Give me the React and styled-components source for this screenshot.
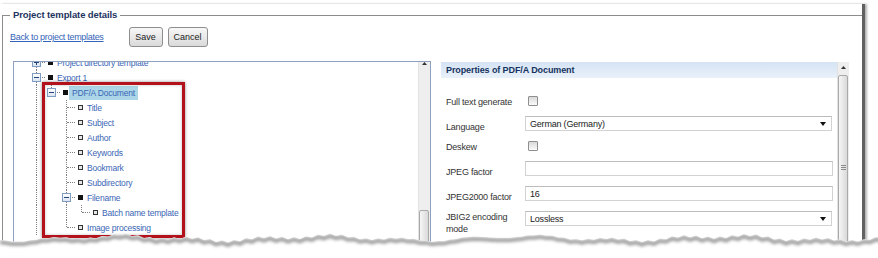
import React from 'react';
import styled, { createGlobalStyle } from 'styled-components';

const GlobalStyle = createGlobalStyle`
  html, body {
    margin: 0;
    padding: 0;
    background: #fff;
  }
  body {
    font-family: "Liberation Sans", Arial, sans-serif;
  }
  * {
    box-sizing: border-box;
  }
`

const Page = styled.div`
  position: relative;
  width: 878px;
  height: 258px;
  overflow: hidden;
  background: #fff;
`

const Paper = styled.div`
  width: 865px;
  height: 254px;
  margin-top: 4px;
  padding-top: 5px;
  border-right: 3px solid #616161;
  box-shadow: 2px 0 2px rgba(0, 0, 0, 0.3);
`

const Fieldset = styled.fieldset`
  margin: 0 0 0 2px;
  padding: 6px 0 0 7px;
  height: 280px;
  min-width: 0;
  border: 1px solid #8c8c8c;
  border-right: none;
  border-bottom: none;
`

const Legend = styled.legend`
  padding: 0 3px;
  font-size: 9.5px;
  line-height: 12px;
  font-weight: bold;
  letter-spacing: -0.1px;
  color: #1d3461;
`

const Toolbar = styled.div`
  display: flex;
  align-items: center;
  height: 20px;
  gap: 5px;
`

const BackLink = styled.a`
  margin-right: 20px;
  font-size: 9px;
  letter-spacing: -0.3px;
  color: #3564b8;
  text-decoration: underline;
`

const Button = styled.button`
  height: 20px;
  min-width: 34px;
  padding: 0 5px;
  border: 1px solid #8e8e8e;
  border-radius: 3px;
  background: linear-gradient(#f7f7f7, #dadada);
  font-family: "Liberation Sans", Arial, sans-serif;
  font-size: 9px;
  color: #222;
`

const Panels = styled.div`
  display: flex;
  gap: 10px;
  height: 200px;
  margin: 14px 0 0 3px;
`

const TreePanel = styled.div`
  display: flex;
  width: 418px;
  border: 1px solid #8ea2c0;
  background: #fff;
`

const TreeBody = styled.div`
  flex: 1;
  overflow: hidden;
  padding-left: 16px;
`

const TreeList = styled.div`
  margin-top: -7px;
`

const Row = styled.div`
  display: flex;
  align-items: center;
  height: 15px;
  white-space: nowrap;
`

const Guide = styled.div`
  position: relative;
  flex-shrink: 0;
  width: 15px;
  height: 15px;

  &::before {
    content: '';
    display: ${({$on}) => $on ? 'block' : 'none'};
    position: absolute;
    left: 6px;
    top: 0;
    bottom: 0;
    border-left: 1px dotted #808080;
  }
`

const Conn = styled.div`
  position: relative;
  display: flex;
  align-items: center;
  flex-shrink: 0;
  width: 15px;
  height: 15px;
  padding-left: 2px;

  &::before {
    content: '';
    position: absolute;
    left: 6px;
    top: ${({$top}) => $top ? 0 : 7}px;
    bottom: ${({$bottom}) => $bottom ? 0 : 8}px;
    border-left: 1px dotted #808080;
  }

  &::after {
    content: '';
    position: absolute;
    left: 7px;
    right: 0;
    top: 7px;
    border-top: 1px dotted #808080;
  }
`

const Expander = styled.div`
  position: relative;
  z-index: 1;
  display: flex;
  align-items: center;
  justify-content: center;
  width: 9px;
  height: 9px;
  border: 1px solid #7f9cc2;
  background: linear-gradient(#ffffff, #dbe4f0);
`

const ExpanderMark = styled.svg`
  display: block;
`

const Bullet = styled.div`
  flex-shrink: 0;
  width: 5px;
  height: 5px;
  margin: 0 4px 0 3px;
  background: ${({$filled}) => $filled ? '#111' : '#e6e6e6'};
  border: ${({$filled}) => $filled ? 'none' : '1px solid #333'};
`

const NodeText = styled.span`
  margin-left: ${({$selected}) => $selected ? -3 : 0}px;
  padding: 0 ${({$selected}) => $selected ? 3 : 0}px;
  font-size: 8.5px;
  line-height: 14px;
  letter-spacing: -0.2px;
  color: #3a66b5;
  background: ${({$selected}) => $selected ? '#acd6e8' : 'transparent'};
`

const Scrollbar = styled.div`
  display: flex;
  flex-direction: column;
  flex-shrink: 0;
  width: 12px;
  background: #eeeeee;
  border-left: 1px solid #e2e2e2;
`

const ScrollArrow = styled.div`
  display: flex;
  align-items: center;
  justify-content: center;
  height: 11px;
`

const Thumb = styled.div`
  display: flex;
  align-items: center;
  justify-content: center;
  flex-shrink: 0;
  height: ${({$height}) => $height}px;
  margin: ${({$offset}) => $offset}px 1px 0 0;
  border: 1px solid #a9a9a9;
  border-radius: 2px;
  background: linear-gradient(90deg, #f6f6f6, #d9d9d9);
`

const PropsPanel = styled.div`
  display: flex;
  width: 408px;
  padding-top: 1px;
  background: #fff;
`

const PropsMain = styled.div`
  flex: 1;
`

const PropsHeader = styled.div`
  height: 16px;
  padding-left: 5px;
  background: linear-gradient(#d5e3f4, #e9f1fa);
  font-size: 9px;
  line-height: 16px;
  font-weight: bold;
  letter-spacing: -0.1px;
  color: #15325f;
`

const Form = styled.div`
  display: flex;
  flex-direction: column;
  gap: 8px;
  padding: 18px 0 0 5px;
`

const FormRow = styled.div`
  display: grid;
  grid-template-columns: 79px 307px;
  align-items: start;
`

const Label = styled.div`
  padding: ${({$pad}) => $pad}px 4px 0 0;
  font-size: 9px;
  line-height: 12px;
  letter-spacing: -0.2px;
  color: #333;
`

const Checkbox = styled.div`
  width: 10px;
  height: 10px;
  margin-left: 3px;
  border: 1px solid #8e8f8f;
  border-radius: 1px;
  background: linear-gradient(#d9d9d9, #fbfbfb);
`

const TextBox = styled.div`
  display: flex;
  align-items: center;
  justify-content: space-between;
  height: 15px;
  width: ${({$wide}) => $wide ? 308 : 307}px;
  padding: 0 5px 0 4px;
  border: 1px solid #d2d2d2;
  border-top-color: #bcbcbc;
  background: #fff;
  font-size: 9px;
  letter-spacing: -0.2px;
  color: #222;
`

const TornEdge = styled.svg`
  position: absolute;
  left: 0;
  bottom: 0;
  display: block;
`

const RedFrame = styled.div`
  position: absolute;
  left: 42px;
  top: 82px;
  width: 143px;
  height: 156px;
  border: 3px solid #b3121c;
  box-shadow: 0 0 3px rgba(0, 0, 0, 0.45), inset 0 0 3px rgba(0, 0, 0, 0.25);
`

const TREE = [
  {label: 'Project directory template', guides: [], top: true, bottom: true, exp: 'plus', filled: true},
  {label: 'Export 1', guides: [], top: true, bottom: true, exp: 'minus', filled: true},
  {label: 'PDF/A Document', guides: [true], top: true, bottom: false, exp: 'minus', filled: true, selected: true},
  {label: 'Title', guides: [true, false], top: true, bottom: true},
  {label: 'Subject', guides: [true, false], top: true, bottom: true},
  {label: 'Author', guides: [true, false], top: true, bottom: true},
  {label: 'Keywords', guides: [true, false], top: true, bottom: true},
  {label: 'Bookmark', guides: [true, false], top: true, bottom: true},
  {label: 'Subdirectory', guides: [true, false], top: true, bottom: true},
  {label: 'Filename', guides: [true, false], top: true, bottom: true, exp: 'minus', filled: true},
  {label: 'Batch name template', guides: [true, false, true], top: true, bottom: false},
  {label: 'Image processing', guides: [true, false], top: true, bottom: false},
]

const FIELDS = [
  {label: 'Full text generate', type: 'check', pad: 0},
  {label: 'Language', type: 'select', value: 'German (Germany)', pad: 5},
  {label: 'Deskew', type: 'check', pad: 0},
  {label: 'JPEG factor', type: 'input', value: '', pad: 5},
  {label: 'JPEG2000 factor', type: 'input', value: '16', pad: 5},
  {label: 'JBIG2 encoding mode', type: 'select', value: 'Lossless', pad: 0},
]

const UpArrow = () => (
  <svg width="5" height="3" viewBox="0 0 5 3"><path d="M0 3 L2.5 0 L5 3 Z" fill="#333"/></svg>
)

const DownArrow = () => (
  <svg width="6" height="4" viewBox="0 0 6 4"><path d="M0 0 L6 0 L3 4 Z" fill="#111"/></svg>
)

const Grip = () => (
  <svg width="5" height="5" viewBox="0 0 5 5">
    <path d="M0 0.5 H5 M0 2.5 H5 M0 4.5 H5" stroke="#8a8a8a" strokeWidth="1"/>
  </svg>
)

const TreeNode = ({node}) => (
  <Row>
    {node.guides.map((on, i) => <Guide key={i} $on={on}/>)}
    <Conn $top={node.top} $bottom={node.bottom}>
      {node.exp && (
        <Expander>
          <ExpanderMark width="5" height="5" viewBox="0 0 5 5">
            <path d={node.exp === 'plus' ? 'M0 2.5 H5 M2.5 0 V5' : 'M0 2.5 H5'} stroke="#24437a" strokeWidth="1"/>
          </ExpanderMark>
        </Expander>
      )}
    </Conn>
    <Bullet $filled={node.filled}/>
    <NodeText $selected={node.selected}>{node.label}</NodeText>
  </Row>
)

const Field = ({field}) => (
  <FormRow>
    <Label $pad={field.pad}>{field.label}</Label>
    {field.type === 'check' && <Checkbox/>}
    {field.type === 'input' && <TextBox $wide>{field.value}</TextBox>}
    {field.type === 'select' && <TextBox>{field.value}<DownArrow/></TextBox>}
  </FormRow>
)

const edgePoints = (() => {
  const pts = []
  for (let x = 0; x <= 882; x += 6) {
    const y = 10 + Math.sin(x * 0.09) * 1.5 + Math.sin(x * 0.031 + 1) * 2 + Math.sin(x * 0.53) * 1.1
    pts.push([x, y])
  }
  return pts
})()

const Torn = () => {
  const line = edgePoints.map(([x, y]) => `${x},${y.toFixed(1)}`).join(' ')
  const area = `M${edgePoints.map(([x, y]) => `${x},${y.toFixed(1)}`).join(' L')} L882,30 L0,30 Z`
  return (
    <TornEdge width="878" height="30" viewBox="0 0 878 30">
      <defs>
        <filter id="edgeBlur" x="-5%" y="-100%" width="110%" height="300%">
          <feGaussianBlur stdDeviation="1.6"/>
        </filter>
        <clipPath id="belowEdge"><path d={area}/></clipPath>
      </defs>
      <path d={area} fill="#fff"/>
      <g clipPath="url(#belowEdge)">
        <polyline points={line} transform="translate(0,2.5)" fill="none" stroke="#a3a3a3" strokeWidth="4" filter="url(#edgeBlur)"/>
      </g>
    </TornEdge>
  )
}

export default function App() {
  return (
    <Page>
      <GlobalStyle/>
      <Paper>
        <Fieldset>
          <Legend>Project template details</Legend>
          <Toolbar>
            <BackLink href="#">Back to project templates</BackLink>
            <Button>Save</Button>
            <Button>Cancel</Button>
          </Toolbar>
          <Panels>
            <TreePanel>
              <TreeBody>
                <TreeList>
                  {TREE.map(node => <TreeNode key={node.label} node={node}/>)}
                </TreeList>
              </TreeBody>
              <Scrollbar>
                <ScrollArrow><UpArrow/></ScrollArrow>
                <Thumb $offset={145} $height={60}/>
              </Scrollbar>
            </TreePanel>
            <PropsPanel>
              <PropsMain>
                <PropsHeader>Properties of PDF/A Document</PropsHeader>
                <Form>
                  {FIELDS.map(field => <Field key={field.label} field={field}/>)}
                </Form>
              </PropsMain>
              <Scrollbar>
                <ScrollArrow><UpArrow/></ScrollArrow>
                <Thumb $offset={2} $height={184}><Grip/></Thumb>
              </Scrollbar>
            </PropsPanel>
          </Panels>
        </Fieldset>
      </Paper>
      <RedFrame/>
      <Torn/>
    </Page>
  )
}
